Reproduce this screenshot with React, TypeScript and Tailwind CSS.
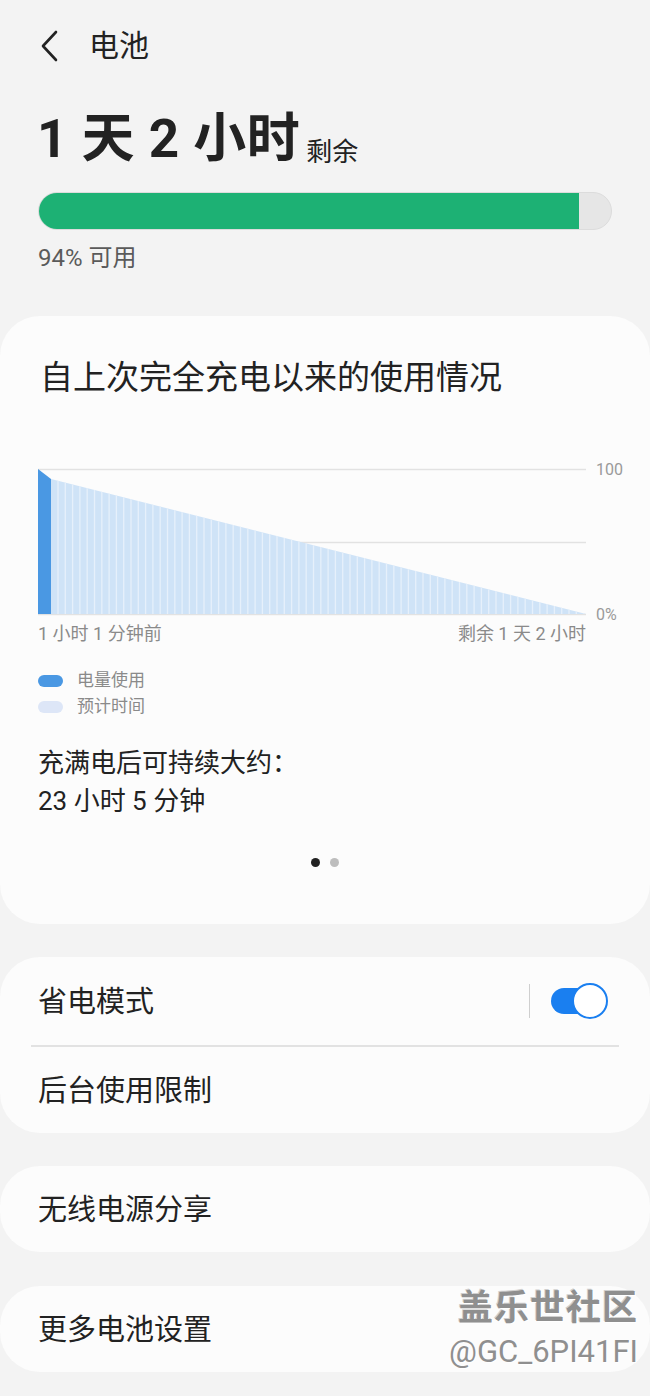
import React from "react";

const font = { fontFamily: 'Roboto, "Noto Sans CJK SC", "Noto Sans", sans-serif' };

function Chart() {
  const stripes: number[] = [];
  for (let x = 58; x < 586; x += 7.3) stripes.push(x);
  return (
    <svg width="650" height="166" viewBox="0 460 650 166" className="block">
      <line x1="38" y1="469.5" x2="586" y2="469.5" stroke="#e2e2e2" strokeWidth="1.5" />
      <line x1="38" y1="542.5" x2="586" y2="542.5" stroke="#e2e2e2" strokeWidth="1.5" />
      <line x1="38" y1="614.5" x2="586" y2="614.5" stroke="#e2e2e2" strokeWidth="1.5" />
      <defs>
        <clipPath id="tri">
          <polygon points="51,479 586,614 51,614" />
        </clipPath>
      </defs>
      <polygon points="51,479 586,614 51,614" fill="#cfe3f7" />
      <g clipPath="url(#tri)">
        {stripes.map((x, i) => (
          <line key={i} x1={x} y1="470" x2={x} y2="615" stroke="#e6f0fb" strokeWidth="1.3" />
        ))}
      </g>
      <polygon points="38,469 51,479 51,614 38,614" fill="#4a98e3" />
      <text x="596" y="475" fontSize="16" fill="#9a9a9a" style={font}>100</text>
      <text x="596" y="620" fontSize="16" fill="#9a9a9a" style={font}>0%</text>
    </svg>
  );
}

export default function App() {
  return (
    <div className="w-[650px] h-[1396px] bg-[#f3f3f3] overflow-hidden relative" style={font}>
      {/* Header */}
      <div className="flex items-center h-[92px] pl-[39px]">
        <svg width="22" height="32" viewBox="0 0 22 32" className="mr-[28px]">
          <polyline points="17,2 4,16 17,30" fill="none" stroke="#222" strokeWidth="2.6" strokeLinecap="round" strokeLinejoin="round" />
        </svg>
        <span className="text-[30px] text-[#222] leading-none">电池</span>
      </div>

      {/* Remaining */}
      <div className="pl-[37px] flex items-end h-[78px] pb-[4px]">
        <span className="text-[53px] font-bold text-[#222] leading-none tracking-[0.5px]">1 天 2 小时</span>
        <span className="text-[26px] text-[#222] leading-none ml-[6px] mb-[1px]">剩余</span>
      </div>

      <div className="mx-[38px] mt-[22px] h-[38px] rounded-full bg-[#e6e6e6] border border-[#dcdcdc] overflow-hidden flex">
        <div className="h-full bg-[#1db174] w-[94.4%]" />
      </div>
      <div className="pl-[38px] mt-[16px] text-[24px] text-[#5a5a5a] leading-none">94% 可用</div>

      {/* Usage card */}
      <div className="mt-[46px] bg-[#fcfcfc] rounded-[40px] h-[608px] pt-[45px]">
        <div className="pl-[40px] text-[33px] text-[#222] leading-none">自上次完全充电以来的使用情况</div>
        <div className="mt-[66px]">
          <Chart />
        </div>
        <div className="flex justify-between w-[586px] pl-[38px] mt-[-1px] text-[18px] text-[#8a8a8a] leading-none">
          <span>1 小时 1 分钟前</span>
          <span>剩余 1 天 2 小时</span>
        </div>
        <div className="pl-[38px] mt-[29px] flex flex-col gap-[9px] text-[17px] text-[#8a8a8a] leading-none">
          <div className="flex items-center">
            <span className="w-[25px] h-[12px] rounded-full bg-[#4a98e3] mr-[14px]" />
            <span>电量使用</span>
          </div>
          <div className="flex items-center">
            <span className="w-[25px] h-[12px] rounded-full bg-[#dde6f7] mr-[14px]" />
            <span>预计时间</span>
          </div>
        </div>
        <div className="pl-[38px] mt-[29px] text-[26px] text-[#222] leading-[38px]">
          <div>充满电后可持续大约：</div>
          <div>23 小时 5 分钟</div>
        </div>
        <div className="flex justify-center gap-[10px] mt-[38px]">
          <span className="w-[9px] h-[9px] rounded-full bg-[#222]" />
          <span className="w-[9px] h-[9px] rounded-full bg-[#bdbdbd]" />
        </div>
      </div>

      {/* Power saving card */}
      <div className="mt-[33px] bg-[#fcfcfc] rounded-[40px] h-[176px] flex flex-col">
        <div className="h-[88px] flex items-center pl-[38px] pr-[42px]">
          <span className="text-[29px] text-[#222] flex-1 pt-[3px]">省电模式</span>
          <span className="w-[1.5px] h-[34px] bg-[#cfcfcf] mr-[20px]" />
          <div className="relative w-[58px] h-[36px] flex items-center">
            <div className="w-[52px] h-[26px] rounded-full bg-[#1a7ff0] ml-[1px]" />
            <div className="absolute right-0 top-0 w-[36px] h-[36px] rounded-full bg-white border-[2.5px] border-[#1a7ff0]" />
          </div>
        </div>
        <div className="mx-[31px] h-[1.5px] bg-[#e2e2e2]" />
        <div className="flex-1 flex items-center pl-[38px] pt-[3px]">
          <span className="text-[29px] text-[#222]">后台使用限制</span>
        </div>
      </div>

      <div className="mt-[33px] bg-[#fcfcfc] rounded-[40px] h-[86px] flex items-center pl-[38px] pt-[3px]">
        <span className="text-[29px] text-[#222]">无线电源分享</span>
      </div>

      <div className="mt-[34px] bg-[#fcfcfc] rounded-[40px] h-[86px] flex items-center pl-[38px] pt-[3px] relative">
        <span className="text-[29px] text-[#222]">更多电池设置</span>
        <div className="absolute right-[12px] top-[5px] flex flex-col items-end leading-none">
          <span className="text-[35px] font-bold text-[#8f8f8f] tracking-[1px]" style={{ textShadow: "1px 1px 0 #fff, -1px -1px 0 #cfcfcf" }}>盖乐世社区</span>
          <span className="text-[31px] text-[#8f8f8f] mt-[10px]" style={{ textShadow: "1px 1px 0 #fff" }}>@GC_6PI41FI</span>
        </div>
      </div>
    </div>
  );
}
